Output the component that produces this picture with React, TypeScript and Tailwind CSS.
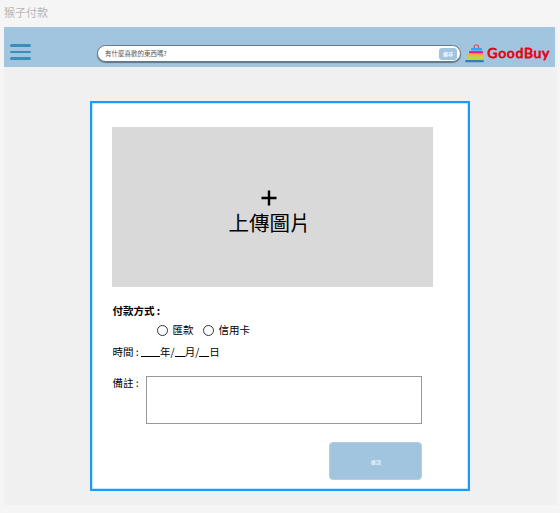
import React from 'react';

function Logo() {
  return (
    <div className="ml-[4px] flex items-center">
      <svg width="19" height="19" viewBox="0 0 19 19" className="shrink-0">
        <path d="M9.2 4.2 V2.5 Q9.2 1 10.7 1 H12 Q13.5 1 13.5 2.5 V4.2" fill="none" stroke="#dc4450" strokeWidth="1.2" />
        <rect x="6" y="4" width="11" height="2.6" rx=".5" fill="#27a9f0" />
        <rect x="4" y="7" width="14" height="2.5" rx=".5" fill="#e5218c" />
        <rect x="2.2" y="9.8" width="16" height="2.6" rx=".5" fill="#fbb03b" />
        <rect x="3" y="12.5" width="15.3" height="3" rx=".5" fill="#b9dc30" />
        <rect x=".4" y="16" width="18.4" height="2.3" rx=".5" fill="#3978bd" />
      </svg>
      <svg width="66" height="19" viewBox="0 0 66 19" className="ml-[2px] shrink-0">
        <text x="1.3" y="14.2" textLength="62" fill="#e60012" stroke="#e60012" strokeWidth=".8" strokeLinejoin="round" className="font-['Lato','Liberation_Sans',sans-serif] text-[14px] font-normal">GoodBuy</text>
      </svg>
    </div>
  );
}

function Header() {
  return (
    <header className="flex h-10 w-[551px] items-start bg-[#a2c5df]">
      <button className="mt-[17px] ml-[6px] flex w-[21px] flex-col gap-[4px]" aria-label="menu">
        <span className="h-[2.5px] rounded-full bg-[#3a8eb9]" />
        <span className="h-[2.5px] rounded-full bg-[#3a8eb9]" />
        <span className="h-[2.5px] rounded-full bg-[#3a8eb9]" />
      </button>
      <div className="mt-[18px] ml-[66px] flex h-[17px] w-[364px] items-center justify-between rounded-full border border-[#65788a] bg-white pr-[3px] pl-[7px] shadow-[0_1px_1px_#607587]">
        <span className="text-[6.5px] leading-none text-[#555]">有什麼喜歡的東西嗎?</span>
        <button className="flex h-[12px] w-[18px] items-center justify-center rounded-[3px] bg-[#a2c5df] text-[5px] leading-none font-medium text-white">搜尋</button>
      </div>
      <div className="mt-[17px]">
        <Logo />
      </div>
    </header>
  );
}

function Option({ label }: { label: string }) {
  return (
    <label className="flex items-center gap-[4px]">
      <span className="size-[11px] rounded-full border border-[#333] bg-white" />
      <span>{label}</span>
    </label>
  );
}

export default function App() {
  return (
    <div className="h-[513px] w-[560px] overflow-hidden bg-[#f5f5f5] pl-1 font-['Noto_Sans_CJK_TC',sans-serif] text-black">
      <h1 className="h-[27px] pt-[4px] text-[11px] leading-4 text-[#b5b5b5]">猴子付款</h1>
      <div className="h-[478px] w-[553px] bg-[#f0f0f0]">
        <Header />
        <main className="mt-[34px] ml-[86px] h-[390px] w-[380px] border-2 border-[#189bff] bg-white pt-[24px] pl-[20.4px] text-[10.5px] leading-4 shadow-[inset_0_0_0_1px_#c4e5ff]">
          <div className="flex h-[160px] w-[321px] flex-col items-center bg-[#d9d9d9] pt-[63px] pr-[7px]">
            <svg width="16" height="16" viewBox="0 0 16 16">
              <path d="M8 .5V15.5M.5 8H15.5" stroke="#000" strokeWidth="2.4" />
            </svg>
            <span className="text-[20.5px] leading-[32px]">上傳圖片</span>
          </div>
          <div className="mt-[16px] font-bold">付款方式 :</div>
          <div className="mt-[3px] ml-[45px] flex gap-[10px]">
            <Option label="匯款" />
            <Option label="信用卡" />
          </div>
          <div className="mt-[6px] flex">
            <span className="whitespace-pre">時間 : </span>
            <span className="h-[13px] w-[19px] border-b border-black" />
            <span>年/</span>
            <span className="h-[13px] w-[10px] border-b border-black" />
            <span>月/</span>
            <span className="h-[13px] w-[10px] border-b border-black" />
            <span>日</span>
          </div>
          <div className="mt-[15px] flex">
            <span className="w-[34px]">備註 :</span>
            <div className="mt-px h-[48px] w-[276px] border border-[#999]" />
          </div>
          <button className="mt-[18px] ml-[217px] flex h-[38px] w-[93px] items-center justify-center rounded-[4px] border border-[#bdcbdd] bg-[#a2c5df] text-[5px] leading-none text-white">確認</button>
        </main>
      </div>
    </div>
  );
}
